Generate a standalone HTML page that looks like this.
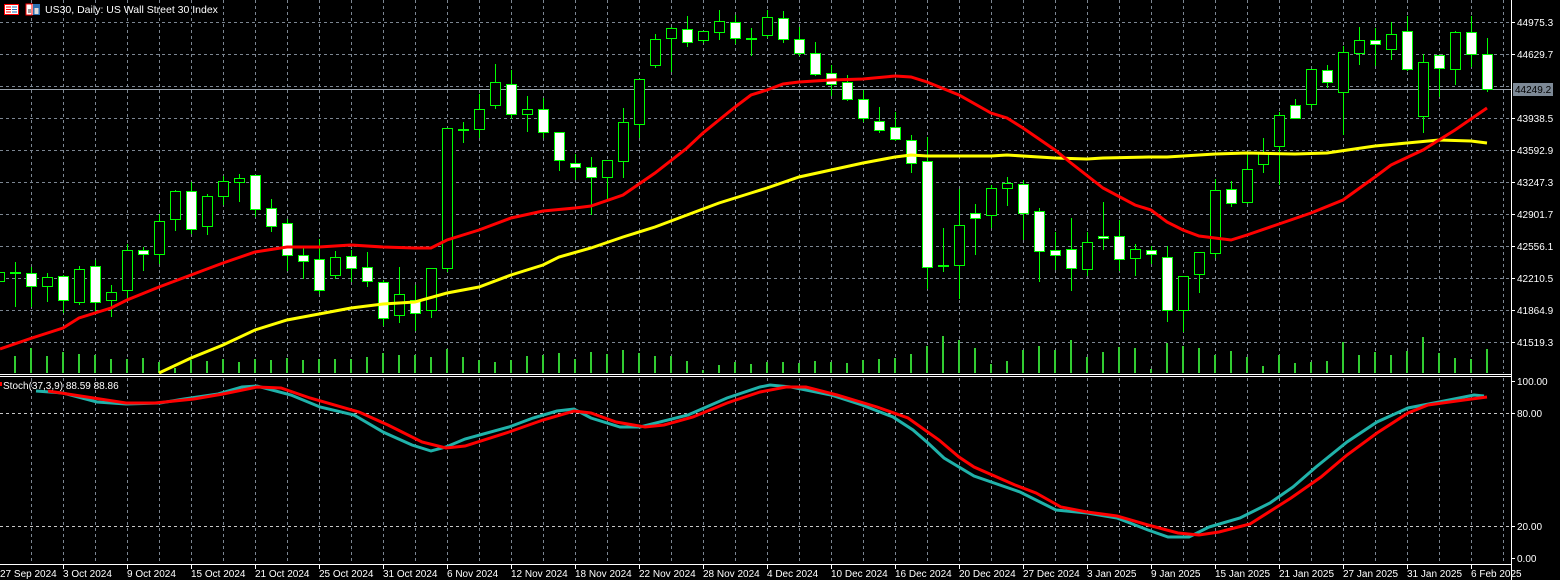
<!DOCTYPE html>
<html><head><meta charset="utf-8"><style>
html,body{margin:0;padding:0;background:#000;width:1560px;height:580px;overflow:hidden}
svg{display:block}
text{font-family:"Liberation Sans",sans-serif;font-size:10px;fill:#fff}
</style></head><body>
<svg width="1560" height="580" viewBox="0 0 1560 580" xmlns="http://www.w3.org/2000/svg">
<rect width="1560" height="580" fill="#000"/>
<!-- grid main -->
<g stroke="#7c8692" stroke-width="1" stroke-dasharray="3,3" fill="none">
<path d="M0 22.5H1511M0 54.5H1511M0 86.5H1511M0 118.5H1511M0 150.5H1511M0 182.5H1511M0 214.5H1511M0 246.5H1511M0 278.5H1511M0 310.5H1511M0 342.5H1511"/>
<path d="M31.5 0V373M63.5 0V373M95.5 0V373M127.5 0V373M159.5 0V373M191.5 0V373M223.5 0V373M255.5 0V373M287.5 0V373M319.5 0V373M351.5 0V373M383.5 0V373M415.5 0V373M447.5 0V373M479.5 0V373M511.5 0V373M543.5 0V373M575.5 0V373M607.5 0V373M639.5 0V373M671.5 0V373M703.5 0V373M735.5 0V373M767.5 0V373M799.5 0V373M831.5 0V373M863.5 0V373M895.5 0V373M927.5 0V373M959.5 0V373M991.5 0V373M1023.5 0V373M1055.5 0V373M1087.5 0V373M1119.5 0V373M1151.5 0V373M1183.5 0V373M1215.5 0V373M1247.5 0V373M1279.5 0V373M1311.5 0V373M1343.5 0V373M1375.5 0V373M1407.5 0V373M1439.5 0V373M1471.5 0V373M1503.5 0V373"/>
<path d="M31.5 378V563M63.5 378V563M95.5 378V563M127.5 378V563M159.5 378V563M191.5 378V563M223.5 378V563M255.5 378V563M287.5 378V563M319.5 378V563M351.5 378V563M383.5 378V563M415.5 378V563M447.5 378V563M479.5 378V563M511.5 378V563M543.5 378V563M575.5 378V563M607.5 378V563M639.5 378V563M671.5 378V563M703.5 378V563M735.5 378V563M767.5 378V563M799.5 378V563M831.5 378V563M863.5 378V563M895.5 378V563M927.5 378V563M959.5 378V563M991.5 378V563M1023.5 378V563M1055.5 378V563M1087.5 378V563M1119.5 378V563M1151.5 378V563M1183.5 378V563M1215.5 378V563M1247.5 378V563M1279.5 378V563M1311.5 378V563M1343.5 378V563M1375.5 378V563M1407.5 378V563M1439.5 378V563M1471.5 378V563M1503.5 378V563"/>
</g>
<path d="M0 413.5H1511M0 526.5H1511" stroke="#c8c8c8" stroke-dasharray="3,3"/>
<!-- price line -->
<path d="M0 89.5H1511" stroke="#9aa3ad" stroke-width="1"/>
<!-- volumes -->
<path stroke="#32cd32" stroke-width="2" d="M15 373V356M31 373V348M47 373V356M63 373V352M79 373V354M95 373V355M111 373V359M127 373V359M143 373V358M159 373V362M175 373V368M191 373V360M207 373V361M223 373V359M239 373V362M255 373V359M271 373V360M287 373V358M303 373V360M319 373V359M335 373V359M351 373V359M367 373V357M383 373V353M399 373V355M415 373V355M431 373V357M447 373V349M463 373V357M479 373V360M495 373V362M511 373V360M527 373V356M543 373V355M559 373V353M575 373V359M591 373V352M607 373V354M623 373V350M639 373V353M655 373V356M671 373V356M687 373V361M703 373V370M719 373V365M735 373V362M751 373V364M767 373V362M783 373V362M799 373V363M815 373V361M831 373V362M847 373V363M863 373V360M879 373V359M895 373V358M911 373V354M927 373V346M943 373V336M959 373V340M975 373V348M991 373V364M1007 373V361M1023 373V350M1039 373V346M1055 373V350M1071 373V340M1087 373V357M1103 373V352M1119 373V347M1135 373V348M1151 373V369M1167 373V343M1183 373V346M1199 373V348M1215 373V355M1231 373V351M1247 373V357M1263 373V366M1279 373V355M1295 373V363M1311 373V362M1327 373V361M1343 373V342M1359 373V355M1375 373V352M1391 373V355M1407 373V351M1423 373V337M1439 373V353M1455 373V358M1471 373V359M1487 373V349"/>
<!-- wicks -->
<path stroke="#00ff00" stroke-width="1" fill="none" d="M-0.5 272V281M15.5 262V307M31.5 267V307M47.5 273V302M63.5 275V313M79.5 266V305M95.5 260V312M111.5 285V317M127.5 244V299M143.5 247V271M159.5 214V264M175.5 190V231M191.5 182V234M207.5 194V235M223.5 176V205M239.5 174V202M255.5 175V217M271.5 199V232M287.5 219V271M303.5 247V279M319.5 239V294M335.5 251V279M351.5 250V282M367.5 252V287M383.5 280V326M399.5 267V323M415.5 285V331M431.5 268V318M447.5 128V272M463.5 122V143M479.5 94V138M495.5 64V109M511.5 70V119M527.5 96V132M543.5 98V138M559.5 132V171M575.5 154V180M591.5 157V215M607.5 160V199M623.5 108V178M639.5 79V138M655.5 34V68M671.5 27V72M687.5 16V47M703.5 31V43M719.5 10V40M735.5 15V44M751.5 28V56M767.5 10V38M783.5 11V43M799.5 27V56M815.5 42V76M831.5 65V96M847.5 75V101M863.5 90V122M879.5 107V133M895.5 112V141M911.5 135V173M927.5 137V289M943.5 228V272M959.5 189V299M975.5 204V255M991.5 185V228M1007.5 177V206M1023.5 180V240M1039.5 208V282M1055.5 232V270M1071.5 218V291M1087.5 232V276M1103.5 202V250M1119.5 220V271M1135.5 244V276M1151.5 246V264M1167.5 246V322M1183.5 276V332M1199.5 252V293M1215.5 179V258M1231.5 181V207M1247.5 154V204M1263.5 138V173M1279.5 112V185M1295.5 99V118M1311.5 69V108M1327.5 65V88M1343.5 46V135M1359.5 27V65M1375.5 28V66M1391.5 22V60M1407.5 16V71M1423.5 54V133M1439.5 55V97M1455.5 31V85M1471.5 16V67M1487.5 38V92"/>
<!-- bull bodies -->
<g fill="#000" stroke="#00ff00" stroke-width="1">
<rect x="-5.5" y="272.5" width="10" height="9"/>
<rect x="10.5" y="272.5" width="10" height="1"/>
<rect x="42.5" y="277.5" width="10" height="9"/>
<rect x="74.5" y="269.5" width="10" height="33"/>
<rect x="106.5" y="292.5" width="10" height="8"/>
<rect x="122.5" y="250.5" width="10" height="40"/>
<rect x="154.5" y="221.5" width="10" height="33"/>
<rect x="170.5" y="191.5" width="10" height="28"/>
<rect x="202.5" y="196.5" width="10" height="30"/>
<rect x="218.5" y="181.5" width="10" height="15"/>
<rect x="234.5" y="178.5" width="10" height="4"/>
<rect x="330.5" y="257.5" width="10" height="18"/>
<rect x="394.5" y="294.5" width="10" height="21"/>
<rect x="426.5" y="268.5" width="10" height="42"/>
<rect x="442.5" y="128.5" width="10" height="140"/>
<rect x="458.5" y="129.5" width="10" height="1"/>
<rect x="474.5" y="109.5" width="10" height="20"/>
<rect x="490.5" y="82.5" width="10" height="23"/>
<rect x="522.5" y="109.5" width="10" height="5"/>
<rect x="602.5" y="160.5" width="10" height="17"/>
<rect x="618.5" y="122.5" width="10" height="39"/>
<rect x="634.5" y="79.5" width="10" height="45"/>
<rect x="650.5" y="39.5" width="10" height="26"/>
<rect x="666.5" y="28.5" width="10" height="10"/>
<rect x="698.5" y="31.5" width="10" height="9"/>
<rect x="714.5" y="21.5" width="10" height="11"/>
<rect x="746.5" y="38.5" width="10" height="1"/>
<rect x="762.5" y="17.5" width="10" height="18"/>
<rect x="938.5" y="265.5" width="10" height="1"/>
<rect x="954.5" y="225.5" width="10" height="40"/>
<rect x="986.5" y="188.5" width="10" height="27"/>
<rect x="1002.5" y="183.5" width="10" height="5"/>
<rect x="1082.5" y="242.5" width="10" height="27"/>
<rect x="1130.5" y="249.5" width="10" height="9"/>
<rect x="1178.5" y="276.5" width="10" height="34"/>
<rect x="1194.5" y="252.5" width="10" height="22"/>
<rect x="1210.5" y="190.5" width="10" height="63"/>
<rect x="1242.5" y="169.5" width="10" height="33"/>
<rect x="1258.5" y="152.5" width="10" height="12"/>
<rect x="1274.5" y="115.5" width="10" height="31"/>
<rect x="1306.5" y="69.5" width="10" height="35"/>
<rect x="1338.5" y="52.5" width="10" height="40"/>
<rect x="1354.5" y="40.5" width="10" height="13"/>
<rect x="1386.5" y="34.5" width="10" height="15"/>
<rect x="1418.5" y="62.5" width="10" height="54"/>
<rect x="1450.5" y="32.5" width="10" height="37"/>
</g>
<!-- bear bodies -->
<g fill="#fff" stroke="#00ff00" stroke-width="1">
<rect x="26.5" y="273.5" width="10" height="13"/>
<rect x="58.5" y="276.5" width="10" height="24"/>
<rect x="90.5" y="266.5" width="10" height="36"/>
<rect x="138.5" y="250.5" width="10" height="4"/>
<rect x="186.5" y="191.5" width="10" height="38"/>
<rect x="250.5" y="175.5" width="10" height="34"/>
<rect x="266.5" y="208.5" width="10" height="18"/>
<rect x="282.5" y="223.5" width="10" height="32"/>
<rect x="298.5" y="255.5" width="10" height="6"/>
<rect x="314.5" y="259.5" width="10" height="31"/>
<rect x="346.5" y="256.5" width="10" height="12"/>
<rect x="362.5" y="267.5" width="10" height="14"/>
<rect x="378.5" y="282.5" width="10" height="36"/>
<rect x="410.5" y="300.5" width="10" height="13"/>
<rect x="506.5" y="84.5" width="10" height="30"/>
<rect x="538.5" y="109.5" width="10" height="23"/>
<rect x="554.5" y="132.5" width="10" height="28"/>
<rect x="570.5" y="163.5" width="10" height="4"/>
<rect x="586.5" y="167.5" width="10" height="10"/>
<rect x="682.5" y="29.5" width="10" height="13"/>
<rect x="730.5" y="22.5" width="10" height="16"/>
<rect x="778.5" y="18.5" width="10" height="21"/>
<rect x="794.5" y="39.5" width="10" height="14"/>
<rect x="810.5" y="53.5" width="10" height="21"/>
<rect x="826.5" y="73.5" width="10" height="11"/>
<rect x="842.5" y="82.5" width="10" height="17"/>
<rect x="858.5" y="99.5" width="10" height="19"/>
<rect x="874.5" y="121.5" width="10" height="9"/>
<rect x="890.5" y="127.5" width="10" height="12"/>
<rect x="906.5" y="140.5" width="10" height="23"/>
<rect x="922.5" y="161.5" width="10" height="106"/>
<rect x="970.5" y="213.5" width="10" height="5"/>
<rect x="1018.5" y="184.5" width="10" height="29"/>
<rect x="1034.5" y="211.5" width="10" height="40"/>
<rect x="1050.5" y="250.5" width="10" height="5"/>
<rect x="1066.5" y="249.5" width="10" height="19"/>
<rect x="1098.5" y="236.5" width="10" height="2"/>
<rect x="1114.5" y="236.5" width="10" height="23"/>
<rect x="1146.5" y="250.5" width="10" height="4"/>
<rect x="1162.5" y="257.5" width="10" height="53"/>
<rect x="1226.5" y="189.5" width="10" height="14"/>
<rect x="1290.5" y="105.5" width="10" height="13"/>
<rect x="1322.5" y="70.5" width="10" height="12"/>
<rect x="1370.5" y="40.5" width="10" height="4"/>
<rect x="1402.5" y="31.5" width="10" height="38"/>
<rect x="1434.5" y="55.5" width="10" height="13"/>
<rect x="1466.5" y="32.5" width="10" height="22"/>
<rect x="1482.5" y="54.5" width="10" height="35"/>
</g>
<!-- MAs -->
<polyline fill="none" stroke="#ffff00" stroke-width="3" points="159,373 191,358 223,345 255,330 287,320 319,314 351,308 383,304 415,302 447,293 479,287 511,275 543,265 559,257 591,248 623,237 655,227 687,215 719,203 751,193 767,188 799,177 831,170 863,163 895,157 911,155 927,156 991,156 1007,155 1039,157 1055,158 1087,159 1103,158 1149,157 1167,157 1215,154 1247,153 1295,154 1327,153 1375,146 1407,143 1439,140 1471,141 1487,143"/>
<polyline fill="none" stroke="#ff0000" stroke-width="3" points="0,349 32,338 63,328 79,318 111,308 127,300 159,287 191,275 223,263 255,252 287,247 319,247 351,245 383,247 415,248 431,248 447,240 479,230 511,218 543,211 575,208 591,206 623,195 655,173 687,148 703,133 735,107 751,95 767,90 783,84 799,82 831,80 863,79 895,76 911,77 927,82 959,95 991,113 1007,118 1023,128 1055,150 1071,163 1103,188 1135,205 1151,210 1167,222 1183,230 1199,236 1215,238 1231,240 1247,235 1279,224 1311,213 1343,200 1375,177 1391,165 1423,150 1439,140 1455,130 1487,108"/>
<!-- separators -->
<path d="M0 374.5H1511M0 376.5H1511" stroke="#fff" stroke-width="1"/>
<!-- stoch -->
<polyline fill="none" stroke="#20b2aa" stroke-width="3" points="36,391 63,393 97,402 126,404 160,403 184,399 218,394 242,387 257,386 291,395 320,407 354,415 383,432 412,445 431,451 446,447 465,439 509,427 533,418 557,411 574,409 591,418 620,427 640,427 688,415 727,398 760,387 770,385 791,387 831,395 862,405 893,417 913,430 928,443 944,458 974,476 1020,492 1056,510 1087,513 1117,518 1148,530 1168,537 1189,537 1209,527 1240,518 1270,503 1293,487 1316,467 1347,442 1377,422 1408,408 1439,402 1474,395 1484,396"/>
<polyline fill="none" stroke="#ff0000" stroke-width="3" points="48,391 87,397 126,403 155,403 194,399 223,394 257,387 281,388 310,398 359,412 388,425 422,442 446,448 465,446 509,432 543,420 574,411 591,413 616,422 645,427 664,425 693,417 727,403 760,392 786,387 806,387 837,395 877,407 908,418 939,440 959,457 974,467 1015,485 1036,493 1061,507 1087,512 1117,516 1148,525 1178,533 1199,535 1219,532 1250,524 1291,498 1321,477 1347,455 1377,433 1408,413 1428,405 1464,400 1487,397"/>
<rect x="0" y="382" width="2" height="4" fill="#ff0000"/>
<text x="3" y="389">Stoch(37,3,9) 88.59 88.86</text>
<!-- axes -->
<path d="M1511.5 0V580M0 564.5H1512" stroke="#fff" stroke-width="1"/>
<g stroke="#fff"><path d="M1511 22.5h4M1511 54.5h4M1511 118.5h4M1511 150.5h4M1511 182.5h4M1511 214.5h4M1511 246.5h4M1511 278.5h4M1511 310.5h4M1511 342.5h4M1511 381.5h4M1511 413.5h4M1511 526.5h4M1511 558.5h4"/>
<path d="M63.5 564V569M127.5 564V569M191.5 564V569M255.5 564V569M319.5 564V569M383.5 564V569M447.5 564V569M511.5 564V569M575.5 564V569M639.5 564V569M703.5 564V569M767.5 564V569M831.5 564V569M895.5 564V569M959.5 564V569M1023.5 564V569M1087.5 564V569M1151.5 564V569M1215.5 564V569M1279.5 564V569M1343.5 564V569M1407.5 564V569M1471.5 564V569"/></g>
<g>
<text x="1517" y="26">44975.3</text>
<text x="1517" y="58">44629.7</text>
<text x="1517" y="122">43938.5</text>
<text x="1517" y="154">43592.9</text>
<text x="1517" y="186">43247.3</text>
<text x="1517" y="218">42901.7</text>
<text x="1517" y="250">42556.1</text>
<text x="1517" y="282">42210.5</text>
<text x="1517" y="314">41864.9</text>
<text x="1517" y="346">41519.3</text>
<text x="1517" y="385">100.00</text>
<text x="1517" y="417">80.00</text>
<text x="1517" y="530">20.00</text>
<text x="1517" y="562">0.00</text>
</g>
<rect x="1513" y="83" width="40" height="13" fill="#7d8996"/>
<text x="1515" y="93" style="fill:#000">44249.2</text>
<g>
<text x="0" y="577">27 Sep 2024</text>
<text x="63" y="577">3 Oct 2024</text>
<text x="127" y="577">9 Oct 2024</text>
<text x="191" y="577">15 Oct 2024</text>
<text x="255" y="577">21 Oct 2024</text>
<text x="319" y="577">25 Oct 2024</text>
<text x="383" y="577">31 Oct 2024</text>
<text x="447" y="577">6 Nov 2024</text>
<text x="511" y="577">12 Nov 2024</text>
<text x="575" y="577">18 Nov 2024</text>
<text x="639" y="577">22 Nov 2024</text>
<text x="703" y="577">28 Nov 2024</text>
<text x="767" y="577">4 Dec 2024</text>
<text x="831" y="577">10 Dec 2024</text>
<text x="895" y="577">16 Dec 2024</text>
<text x="959" y="577">20 Dec 2024</text>
<text x="1023" y="577">27 Dec 2024</text>
<text x="1087" y="577">3 Jan 2025</text>
<text x="1151" y="577">9 Jan 2025</text>
<text x="1215" y="577">15 Jan 2025</text>
<text x="1279" y="577">21 Jan 2025</text>
<text x="1343" y="577">27 Jan 2025</text>
<text x="1407" y="577">31 Jan 2025</text>
<text x="1471" y="577">6 Feb 2025</text>
</g>
<!-- header icons -->
<rect x="4.5" y="4.5" width="14" height="10" fill="#fff" stroke="#ff0000"/>
<path d="M6 7h5M6 9.5h5M6 12h5" stroke="#ff0000"/>
<path d="M12 7h5M12 9.5h5M12 12h5" stroke="#1e6eb4"/>
<rect x="26" y="4" width="14" height="11" fill="#fff"/>
<rect x="26" y="4" width="6" height="11" fill="none" stroke="#ff0000"/>
<rect x="33" y="4" width="7" height="11" fill="#2a6fb0"/>
<rect x="34.5" y="8" width="4" height="6" fill="#ddd"/>
<rect x="28" y="9" width="3" height="4" fill="#999"/>
<text x="45" y="13" style="font-size:10.5px">US30, Daily:  US Wall Street 30 Index</text>
</svg>
</body></html>
